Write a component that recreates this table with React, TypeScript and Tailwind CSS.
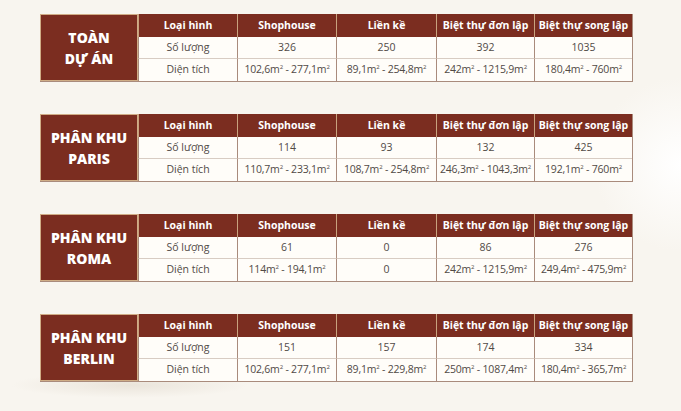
import React from "react";

type Block = {
  title: [string, string];
  counts: string[];
  areas: [string, string][];
};

const heads = ["Shophouse", "Liền kề", "Biệt thự đơn lập", "Biệt thự song lập"];

const blocks: Block[] = [
  {
    title: ["TOÀN", "DỰ ÁN"],
    counts: ["326", "250", "392", "1035"],
    areas: [
      ["102,6", "277,1"],
      ["89,1", "254,8"],
      ["242", "1215,9"],
      ["180,4", "760"],
    ],
  },
  {
    title: ["PHÂN KHU", "PARIS"],
    counts: ["114", "93", "132", "425"],
    areas: [
      ["110,7", "233,1"],
      ["108,7", "254,8"],
      ["246,3", "1043,3"],
      ["192,1", "760"],
    ],
  },
  {
    title: ["PHÂN KHU", "ROMA"],
    counts: ["61", "0", "86", "276"],
    areas: [
      ["114", "194,1"],
      ["", "0"],
      ["242", "1215,9"],
      ["249,4", "475,9"],
    ],
  },
  {
    title: ["PHÂN KHU", "BERLIN"],
    counts: ["151", "157", "174", "334"],
    areas: [
      ["102,6", "277,1"],
      ["89,1", "229,8"],
      ["250", "1087,4"],
      ["180,4", "365,7"],
    ],
  },
];

function M({ v }: { v: string }) {
  return (
    <span>
      {v}m<sup className="text-[6px] -top-[4px]">2</sup>
    </span>
  );
}

function Area({ a }: { a: [string, string] }) {
  if (!a[0]) return <span>{a[1]}</span>;
  return (
    <span className="whitespace-nowrap tracking-[-0.2px]">
      <M v={a[0]} /> - <M v={a[1]} />
    </span>
  );
}

function Table({ b }: { b: Block }) {
  const head =
    "flex items-center justify-center bg-[#7b2d20] text-white font-bold text-[10.5px] whitespace-nowrap border-l border-[#c9a27e]";
  const cell =
    "flex items-center justify-center bg-[#fffdf9] text-[#514a46] text-[10.5px] border-l border-[#a98b7c]";
  return (
    <div className="w-fit grid grid-cols-[98px_99px_99px_100px_98px_98px] grid-rows-[23px_22px_22px] border-r border-b border-[#a98b7c]">
      <div className="row-span-3 flex flex-col items-center justify-center bg-[#7b2d20] text-white font-extrabold text-[14px] leading-[21px] border border-[#d0ad86] pt-[1px]">
        <span>{b.title[0]}</span>
        <span>{b.title[1]}</span>
      </div>
      <div className={head}>Loại hình</div>
      {heads.map((h) => (
        <div key={h} className={head}>
          {h}
        </div>
      ))}
      <div className={`${cell} border-b border-b-[#d8ccc3]`}>Số lượng</div>
      {b.counts.map((c, i) => (
        <div key={i} className={`${cell} border-b border-b-[#d8ccc3]`}>
          {c}
        </div>
      ))}
      <div className={cell}>Diện tích</div>
      {b.areas.map((a, i) => (
        <div key={i} className={cell}>
          <Area a={a} />
        </div>
      ))}
    </div>
  );
}

export default function App() {
  return (
    <div
      className="relative w-[681px] h-[411px] overflow-hidden bg-[#f8f5ef] bg-[radial-gradient(circle_at_100%_40%,#ffffff_0,#f8f5ef_12%)]"
      style={{ fontFamily: "'Open Sans', Lato, sans-serif" }}
    >
      {/* faint feather decoration under the last table */}
      <div className="absolute left-[10px] top-[372px] w-[240px] h-[26px] rounded-full bg-[radial-gradient(ellipse_at_center,#e4ddd2_0,transparent_70%)] opacity-70" />
      <div className="relative flex flex-col gap-[32px] pt-[14px] pl-[40px]">
        {blocks.map((b) => (
          <Table key={b.title[1]} b={b} />
        ))}
      </div>
    </div>
  );
}
